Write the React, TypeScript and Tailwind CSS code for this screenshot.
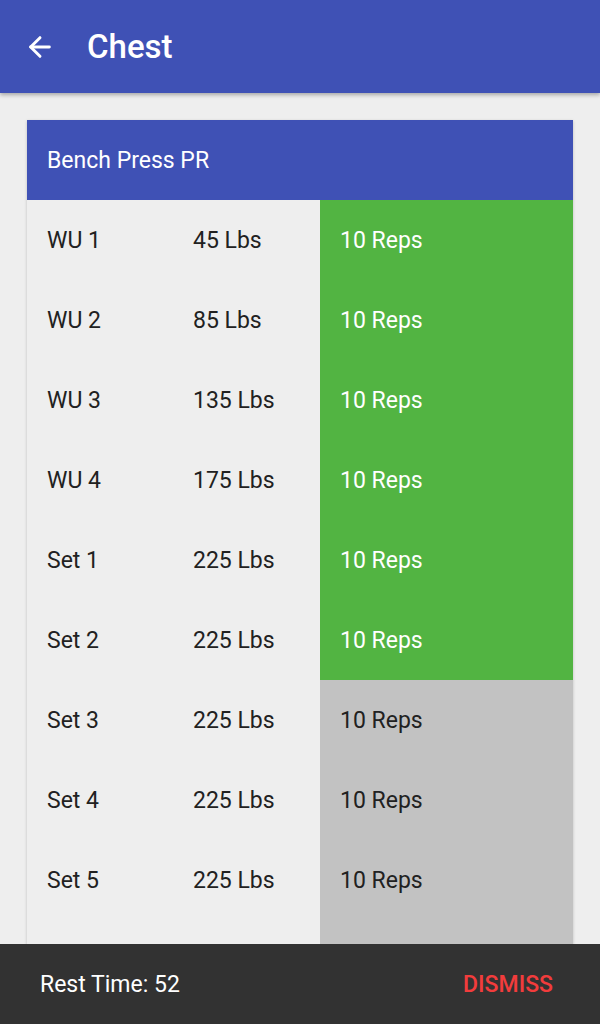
import { ArrowLeft } from "lucide-react";

type SetRow = {
  label: string;
  weight: number;
  reps: number;
  done: boolean;
};

const rows: SetRow[] = [
  { label: "WU 1", weight: 45, reps: 10, done: true },
  { label: "WU 2", weight: 85, reps: 10, done: true },
  { label: "WU 3", weight: 135, reps: 10, done: true },
  { label: "WU 4", weight: 175, reps: 10, done: true },
  { label: "Set 1", weight: 225, reps: 10, done: true },
  { label: "Set 2", weight: 225, reps: 10, done: true },
  { label: "Set 3", weight: 225, reps: 10, done: false },
  { label: "Set 4", weight: 225, reps: 10, done: false },
  { label: "Set 5", weight: 225, reps: 10, done: false },
];

export default function App() {
  return (
    <div className="flex h-[1024px] w-full flex-col overflow-hidden bg-[#eeeeee] font-['Roboto',sans-serif]">
      <header className="relative z-10 flex h-[93px] shrink-0 items-center bg-[#3f51b5] shadow-[0_2px_4px_rgba(0,0,0,0.3)]">
        <div className="flex w-[87px] justify-start pl-[24px]">
          <ArrowLeft className="h-[32px] w-[32px] text-white" strokeWidth={2.2} />
        </div>
        <h1 className="text-[33px] font-medium text-white">Chest</h1>
      </header>

      <main className="min-h-0 flex-1 overflow-hidden px-[27px] pt-[27px]">
        <div className="shadow-[0_1px_3px_rgba(0,0,0,0.2)]">
          <div className="flex h-[80px] items-center bg-[#3f51b5] pl-5 pt-[2px] text-[23px] text-white">
            Bench Press PR
          </div>
          {rows.map((row) => (
            <div
              key={row.label}
              className="grid h-[80px] grid-cols-[166px_127px_1fr] items-stretch text-[23px] text-[#212121]"
            >
              <div className="flex items-center bg-[#eeeeee] pl-5 pt-[2px]">{row.label}</div>
              <div className="flex items-center bg-[#eeeeee] pt-[2px]">{row.weight} Lbs</div>
              <div
                className={`flex items-center pl-5 pt-[2px] ${
                  row.done ? "bg-[#52b442] text-white" : "bg-[#c2c2c2] text-[#212121]"
                }`}
              >
                {row.reps} Reps
              </div>
            </div>
          ))}
          {/* next row sits under the rest-timer bar */}
          <div className="grid h-[80px] grid-cols-[166px_127px_1fr]">
            <div className="bg-[#eeeeee]" />
            <div className="bg-[#eeeeee]" />
            <div className="bg-[#c2c2c2]" />
          </div>
        </div>
      </main>

      <footer className="flex h-[80px] shrink-0 items-center justify-between bg-[#323232] pl-10 pr-[47px] pt-[2px]">
        <span className="text-[23px] text-white">Rest Time: 52</span>
        <button type="button" className="text-[23px] font-medium text-[#f23c3c]">
          DISMISS
        </button>
      </footer>
    </div>
  );
}
